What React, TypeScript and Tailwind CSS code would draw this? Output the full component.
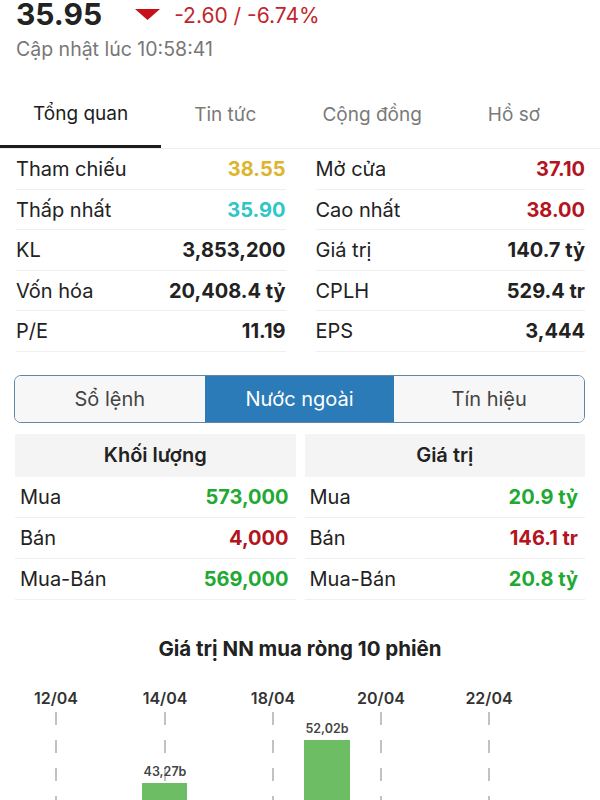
import React from "react";

type Cell = { label: string; value: string; color: string };

const stats: Cell[][] = [
  [
    { label: "Tham chiếu", value: "38.55", color: "text-[#dcb52c]" },
    { label: "Mở cửa", value: "37.10", color: "text-[#b3141d]" },
  ],
  [
    { label: "Thấp nhất", value: "35.90", color: "text-[#2ec6c8]" },
    { label: "Cao nhất", value: "38.00", color: "text-[#b3141d]" },
  ],
  [
    { label: "KL", value: "3,853,200", color: "text-[#222]" },
    { label: "Giá trị", value: "140.7 tỷ", color: "text-[#222]" },
  ],
  [
    { label: "Vốn hóa", value: "20,408.4 tỷ", color: "text-[#222]" },
    { label: "CPLH", value: "529.4 tr", color: "text-[#222]" },
  ],
  [
    { label: "P/E", value: "11.19", color: "text-[#222]" },
    { label: "EPS", value: "3,444", color: "text-[#222]" },
  ],
];

const volume: Cell[] = [
  { label: "Mua", value: "573,000", color: "text-[#22a934]" },
  { label: "Bán", value: "4,000", color: "text-[#b3141d]" },
  { label: "Mua-Bán", value: "569,000", color: "text-[#22a934]" },
];

const amount: Cell[] = [
  { label: "Mua", value: "20.9 tỷ", color: "text-[#22a934]" },
  { label: "Bán", value: "146.1 tr", color: "text-[#b3141d]" },
  { label: "Mua-Bán", value: "20.8 tỷ", color: "text-[#22a934]" },
];

const tabs = ["Tổng quan", "Tin tức", "Cộng đồng", "Hồ sơ"];
const dates = [
  { x: 56, t: "12/04" },
  { x: 165, t: "14/04" },
  { x: 273, t: "18/04" },
  { x: 381, t: "20/04" },
  { x: 489, t: "22/04" },
];

const ForeignTable = ({ title, rows }: { title: string; rows: Cell[] }) => (
  <div className="flex flex-col">
    <div className="h-[43px] bg-[#f4f4f4] flex items-center justify-center text-[20px] font-semibold text-[#222]">
      {title}
    </div>
    {rows.map((r) => (
      <div
        key={r.label}
        className="h-[41px] flex items-center justify-between pl-[5px] pr-[7px] border-b border-[#efefef]"
      >
        <span className="text-[20px] text-[#222]">{r.label}</span>
        <span className={`text-[20px] font-bold ${r.color}`}>{r.value}</span>
      </div>
    ))}
  </div>
);

export default function App() {
  return (
    <div className="w-[600px] h-[800px] overflow-hidden bg-white font-['Inter',sans-serif] text-[#222]">
      {/* Giá */}
      <div className="px-4 -mt-[4px]">
        <div className="flex items-center h-[36px]">
          <span className="text-[30px] font-bold leading-none">35.95</span>
          <svg width="25" height="11" viewBox="0 0 25 11" className="ml-[33px] mt-[1px]">
            <polygon points="0,0 25,0 12.5,11" fill="#c8101b" />
          </svg>
          <span className="ml-[14px] text-[21px] text-[#c0262d] leading-none mt-[3px]">-2.60 / -6.74%</span>
        </div>
        <div className="mt-[3px] text-[19.5px] text-[#777]">Cập nhật lúc 10:58:41</div>
      </div>

      {/* Tabs */}
      <div className="mt-[18px] flex border-b border-[#ededed]">
        {tabs.map((t, i) => (
          <div
            key={t}
            className={`h-[66px] px-[33px] flex items-center text-[19px] ${
              i === 0 ? "text-[#1c1c1c] border-b-[3px] border-[#1c1c1c]" : "text-[#7a7a7a]"
            }`}
          >
            {t}
          </div>
        ))}
      </div>

      {/* Thống kê */}
      <div className="grid grid-cols-2 gap-x-[30px] pl-4 pr-[15px]">
        {stats.map((row) =>
          row.map((c) => (
            <div
              key={c.label}
              className="h-[40.5px] flex items-center justify-between border-b border-[#efefef]"
            >
              <span className="text-[20px] text-[#222]">{c.label}</span>
              <span className={`text-[20px] font-bold ${c.color}`}>{c.value}</span>
            </div>
          ))
        )}
      </div>

      {/* Segmented */}
      <div className="mt-[23px] ml-[14px] mr-[15px] h-[48px] grid grid-cols-3 rounded-[7px] border-[1.5px] border-[#5d86a8] overflow-hidden text-[20px]">
        <div className="flex items-center justify-center bg-[#f7f7f7] text-[#444]">Sổ lệnh</div>
        <div className="flex items-center justify-center bg-[#2b7bb9] text-white">Nước ngoài</div>
        <div className="flex items-center justify-center bg-[#f7f7f7] text-[#444]">Tín hiệu</div>
      </div>

      {/* Nước ngoài */}
      <div className="mt-[11px] grid grid-cols-2 gap-x-[9px] pl-[15px] pr-[15px]">
        <ForeignTable title="Khối lượng" rows={volume} />
        <ForeignTable title="Giá trị" rows={amount} />
      </div>

      {/* Biểu đồ */}
      <div className="mt-[37px] text-center text-[20.5px] font-bold text-[#222] leading-[24px]">
        Giá trị NN mua ròng 10 phiên
      </div>
      <svg width="600" height="130" viewBox="0 0 600 130" className="mt-[19px] block">
        {dates.map((d) => (
          <g key={d.t}>
            <text
              x={d.x}
              y="24"
              textAnchor="middle"
              fontSize="16"
              fontWeight="600"
              fill="#333"
              fontFamily="Inter, sans-serif"
            >
              {d.t}
            </text>
            <line
              x1={d.x}
              x2={d.x}
              y1="32"
              y2="130"
              stroke="#9a9a9a"
              strokeWidth="1.2"
              strokeDasharray="13 15"
            />
          </g>
        ))}
        <rect x="142" y="103" width="45" height="30" fill="#6cbd64" />
        <text x="165" y="96" textAnchor="middle" fontSize="12.5" fontWeight="600" fill="#444" fontFamily="Inter, sans-serif">
          43,27b
        </text>
        <rect x="304" y="60" width="46" height="70" fill="#6cbd64" />
        <text x="327" y="53" textAnchor="middle" fontSize="12.5" fontWeight="600" fill="#444" fontFamily="Inter, sans-serif">
          52,02b
        </text>
      </svg>
    </div>
  );
}
